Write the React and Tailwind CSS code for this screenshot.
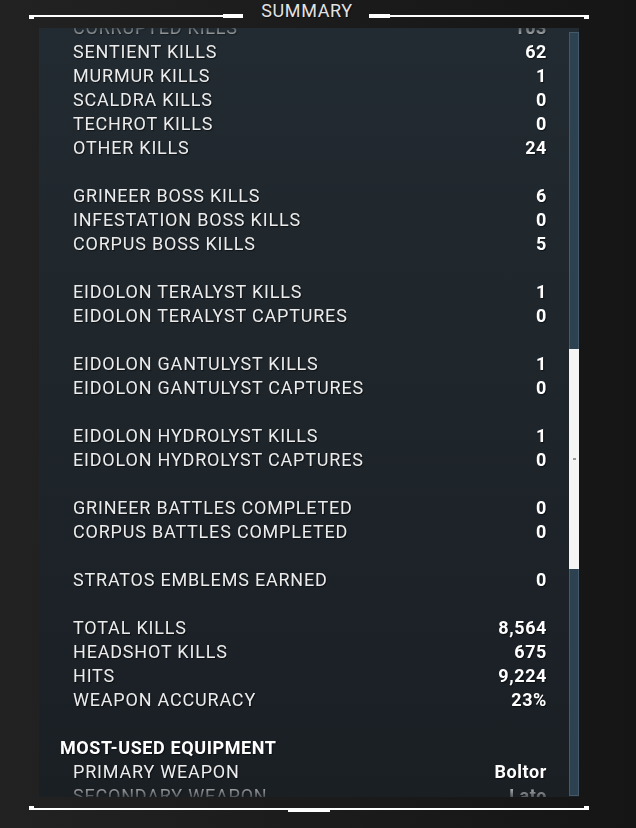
import React from "react";

const rows = [
  ["CORRUPTED KILLS", "103"],
  ["SENTIENT KILLS", "62"],
  ["MURMUR KILLS", "1"],
  ["SCALDRA KILLS", "0"],
  ["TECHROT KILLS", "0"],
  ["OTHER KILLS", "24"],
  null,
  ["GRINEER BOSS KILLS", "6"],
  ["INFESTATION BOSS KILLS", "0"],
  ["CORPUS BOSS KILLS", "5"],
  null,
  ["EIDOLON TERALYST KILLS", "1"],
  ["EIDOLON TERALYST CAPTURES", "0"],
  null,
  ["EIDOLON GANTULYST KILLS", "1"],
  ["EIDOLON GANTULYST CAPTURES", "0"],
  null,
  ["EIDOLON HYDROLYST KILLS", "1"],
  ["EIDOLON HYDROLYST CAPTURES", "0"],
  null,
  ["GRINEER BATTLES COMPLETED", "0"],
  ["CORPUS BATTLES COMPLETED", "0"],
  null,
  ["STRATOS EMBLEMS EARNED", "0"],
  null,
  ["TOTAL KILLS", "8,564"],
  ["HEADSHOT KILLS", "675"],
  ["HITS", "9,224"],
  ["WEAPON ACCURACY", "23%"],
  null,
  "MOST-USED EQUIPMENT",
  ["PRIMARY WEAPON", "Boltor"],
  ["SECONDARY WEAPON", "Lato"],
];

export default function App() {
  return (
    <div
      className="w-[636px] h-[828px] overflow-hidden bg-[linear-gradient(90deg,#222222_0%,#1c1c1c_45%,#151515_100%)] text-[18px] tracking-[0.6px] [text-shadow:1px_1px_1px_rgba(0,0,0,0.55)]"
      style={{ fontFamily: "Roboto, 'Liberation Sans', sans-serif" }}
    >
      {/* header */}
      <div className="ml-[29px] w-[560px] h-[28px] flex items-start">
        <div className="w-[5px] h-[4px] mt-[15px] bg-white" />
        <div className="w-[189px] h-[2px] mt-[15px] bg-white" />
        <div className="w-[20px] h-[4px] mt-[14px] bg-white" />
        <div className="w-[126px] mt-[2px] leading-[18px] text-center text-[#e2e2e2] pl-[2px]">SUMMARY</div>
        <div className="w-[21px] h-[4px] mt-[14px] bg-white" />
        <div className="flex-1 h-[2px] mt-[15px] bg-white" />
        <div className="w-[5px] h-[4px] mt-[15px] bg-white" />
      </div>

      {/* panel */}
      <div className="ml-[39px] w-[540px] h-[769px] flex bg-[linear-gradient(180deg,#222b31_0%,#1e252b_50%,#1a1f24_100%)]">
        <div className="flex-1 overflow-hidden pl-[34px] pr-[22px] [mask-image:linear-gradient(180deg,rgba(0,0,0,0.25)_0px,#000_14px,#000_calc(100%-16px),rgba(0,0,0,0.25)_100%)]">
          <div className="-mt-[12px]">
            {rows.map((r, i) => {
              if (r === null) return <div key={i} className="h-[24px]" />;
              if (typeof r === "string")
                return (
                  <div key={i} className="h-[24px] leading-[24px] -ml-[13px] font-bold text-white">
                    {r}
                  </div>
                );
              return (
                <div key={i} className="h-[24px] leading-[24px] flex justify-between">
                  <span className="text-[#ececec] tracking-[0.8px]">{r[0]}</span>
                  <span className="font-bold text-white">{r[1]}</span>
                </div>
              );
            })}
          </div>
        </div>
        <div className="w-[10px] mt-[4px] h-[764px] bg-[#2c4250] border border-[#46596a] pt-[316px] flex flex-col">
          <div className="-mx-[1px] h-[220px] bg-[#f5f5f5] flex items-center justify-center">
            <div className="w-[3px] h-[2px] bg-[#9a9a9a]" />
          </div>
        </div>
      </div>

      {/* footer line */}
      <div className="ml-[29px] w-[560px] mt-[9px] h-[8px] flex items-start">
        <div className="w-[5px] h-[4px] bg-white" />
        <div className="w-[254px] h-[2px] mt-[2px] bg-white" />
        <div className="w-[42px] h-[4px] mt-[2px] bg-white" />
        <div className="flex-1 h-[2px] mt-[2px] bg-white" />
        <div className="w-[5px] h-[4px] bg-white" />
      </div>
    </div>
  );
}
